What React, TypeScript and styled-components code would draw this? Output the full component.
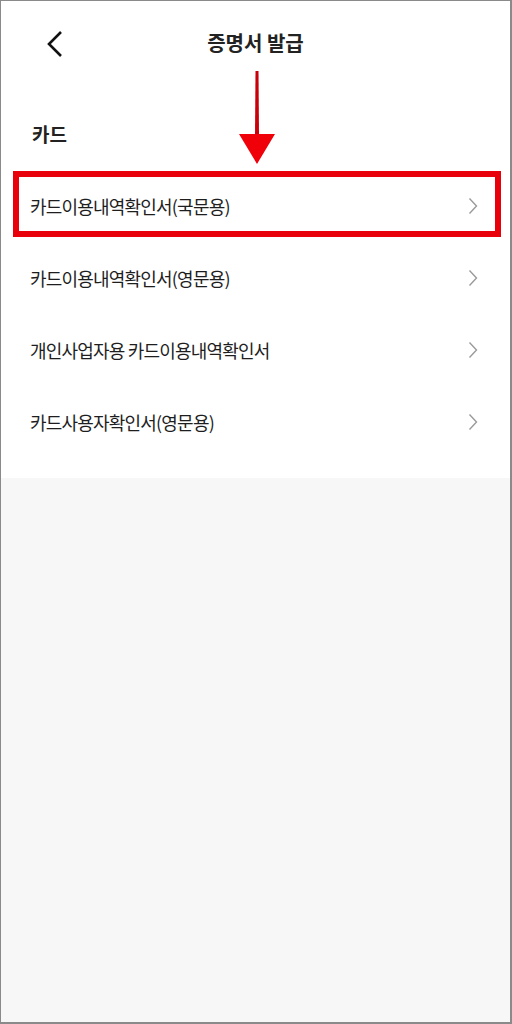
import styled, { createGlobalStyle } from "styled-components";

const GlobalStyle = createGlobalStyle`
    html, body {
        margin: 0;
        padding: 0;
        background: #ffffff;
    }
    body {
        font-family: "Noto Sans CJK KR", "Noto Sans", sans-serif;
        color: #222222;
    }
`;

const Frame = styled.div`
    position: relative;
    width: 512px;
    height: 1024px;
    box-sizing: border-box;
    border: 1px solid #8a8a8a;
    border-right-width: 2px;
    border-bottom-width: 2px;
    background: #f7f7f7;
    overflow: hidden;
`;

const Sheet = styled.div`
    background: #ffffff;
    padding-bottom: 20px;
`;

const Header = styled.header`
    height: 85px;
    display: flex;
    align-items: center;
    justify-content: center;
    position: relative;
`;

const BackButton = styled.button`
    position: absolute;
    left: 38px;
    top: 26px;
    width: 32px;
    height: 34px;
    border: none;
    background: none;
    padding: 0;
    display: flex;
    align-items: center;
    justify-content: center;
`;

const Title = styled.h1`
    margin: 0;
    font-size: 20px;
    font-weight: 700;
    color: #222222;
    letter-spacing: 0;
    transform: translateY(-1px);
`;

const SectionLabel = styled.h2`
    margin: 0;
    padding: 34px 0 0 31px;
    height: 50px;
    font-size: 19px;
    font-weight: 700;
    line-height: 28px;
    color: #222222;
    box-sizing: border-box;
`;

const List = styled.ul`
    list-style: none;
    margin: 34px 0 0;
    padding: 0;
`;

const Row = styled.li`
    height: 72px;
    display: flex;
    align-items: center;
    justify-content: space-between;
    padding: 0 32px 0 29px;
    font-size: 18px;
    color: #1e1e1e;
    letter-spacing: -0.8px;
    box-sizing: border-box;
`;

const Highlight = styled.div`
    position: absolute;
    left: 12px;
    top: 170px;
    width: 488px;
    height: 66px;
    box-sizing: border-box;
    border: 6px solid #e8000b;
    pointer-events: none;
`;

const Arrow = styled.svg`
    position: absolute;
    left: 236px;
    top: 68px;
    pointer-events: none;
`;

const Chevron = () => (
    <svg width="10" height="18" viewBox="0 0 10 18">
        <path d="M1.5 1.5 L8.5 9 L1.5 16.5" fill="none" stroke="#9a9a9a" strokeWidth="1.4" />
    </svg>
);

const items = [
    "카드이용내역확인서(국문용)",
    "카드이용내역확인서(영문용)",
    "개인사업자용 카드이용내역확인서",
    "카드사용자확인서(영문용)",
];

export default function App() {
    return (
        <>
            <GlobalStyle />
            <Frame>
                <Sheet>
                    <Header>
                        <BackButton aria-label="back">
                            <svg width="18" height="28" viewBox="0 0 18 28">
                                <path d="M15 2 L3 14 L15 26" fill="none" stroke="#111111" strokeWidth="2.6" />
                            </svg>
                        </BackButton>
                        <Title>증명서 발급</Title>
                    </Header>
                    <SectionLabel>카드</SectionLabel>
                    <List>
                        {items.map((t) => (
                            <Row key={t}>
                                <span>{t}</span>
                                <Chevron />
                            </Row>
                        ))}
                    </List>
                </Sheet>
                <Highlight />
                <Arrow width="40" height="98" viewBox="0 0 40 98">
                    <path d="M18.5 2 L21.5 2 L22 66 L18 66 Z" fill="#c8000a" />
                    <path d="M2 65 L38 65 L20 95 Z" fill="#f00008" />
                </Arrow>
            </Frame>
        </>
    );
}
